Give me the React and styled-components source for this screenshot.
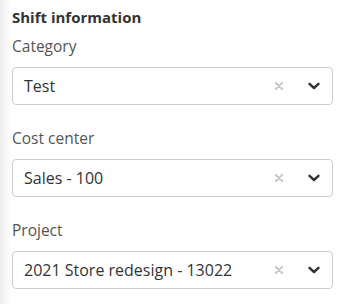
import React from "react";
import styled, { createGlobalStyle } from "styled-components";

const GlobalStyle = createGlobalStyle`
  html, body {
    margin: 0;
    padding: 0;
    background: #ffffff;
  }
  body {
    font-family: "Open Sans", Lato, sans-serif;
  }
`;

const Panel = styled.div`
  width: 342px;
  height: 304px;
  box-sizing: border-box;
  padding: 7px 9px 0 12px;
  background: linear-gradient(to right, #ececec 0px, #f8f8f8 6px, #ffffff 12px);
  display: flex;
  flex-direction: column;
`;

const Title = styled.h3`
  margin: 0 0 9px;
  font-size: 15px;
  line-height: 20px;
  font-weight: 700;
  color: #333333;
`;

const Field = styled.div`
  display: flex;
  flex-direction: column;
  margin-bottom: 23px;
`;

const Label = styled.label`
  font-size: 15.5px;
  line-height: 20px;
  color: #555555;
  margin-bottom: 11px;
`;

const SelectBox = styled.div`
  height: 38px;
  box-sizing: border-box;
  border: 1px solid #cccccc;
  border-radius: 4px;
  background: #ffffff;
  display: flex;
  align-items: center;
  padding: 0 12px 0 11px;
`;

const Value = styled.span`
  flex: 1;
  font-size: 16px;
  color: #333333;
  white-space: nowrap;
`;

const IconButton = styled.span`
  display: flex;
  align-items: center;
  justify-content: center;
  margin-left: ${(p) => p.$gap || 0}px;
`;

const ClearIcon = () => (
  <svg width="8" height="8" viewBox="0 0 8 8">
    <path d="M0.8 0.8 L7.2 7.2 M7.2 0.8 L0.8 7.2" stroke="#c4c4c4" strokeWidth="1.8" strokeLinecap="round" />
  </svg>
);

const ChevronIcon = () => (
  <svg width="12" height="8" viewBox="0 0 12 8">
    <path d="M1.5 1.8 L6 6 L10.5 1.8" fill="none" stroke="#333333" strokeWidth="2.4" strokeLinecap="round" strokeLinejoin="round" />
  </svg>
);

const fields = [
  { label: "Category", value: "Test" },
  { label: "Cost center", value: "Sales - 100" },
  { label: "Project", value: "2021 Store redesign - 13022" },
];

export default function App() {
  return (
    <>
      <GlobalStyle />
      <Panel>
        <Title>Shift information</Title>
        {fields.map((f) => (
          <Field key={f.label}>
            <Label>{f.label}</Label>
            <SelectBox>
              <Value>{f.value}</Value>
              <IconButton>
                <ClearIcon />
              </IconButton>
              <IconButton $gap={25}>
                <ChevronIcon />
              </IconButton>
            </SelectBox>
          </Field>
        ))}
      </Panel>
    </>
  );
}
